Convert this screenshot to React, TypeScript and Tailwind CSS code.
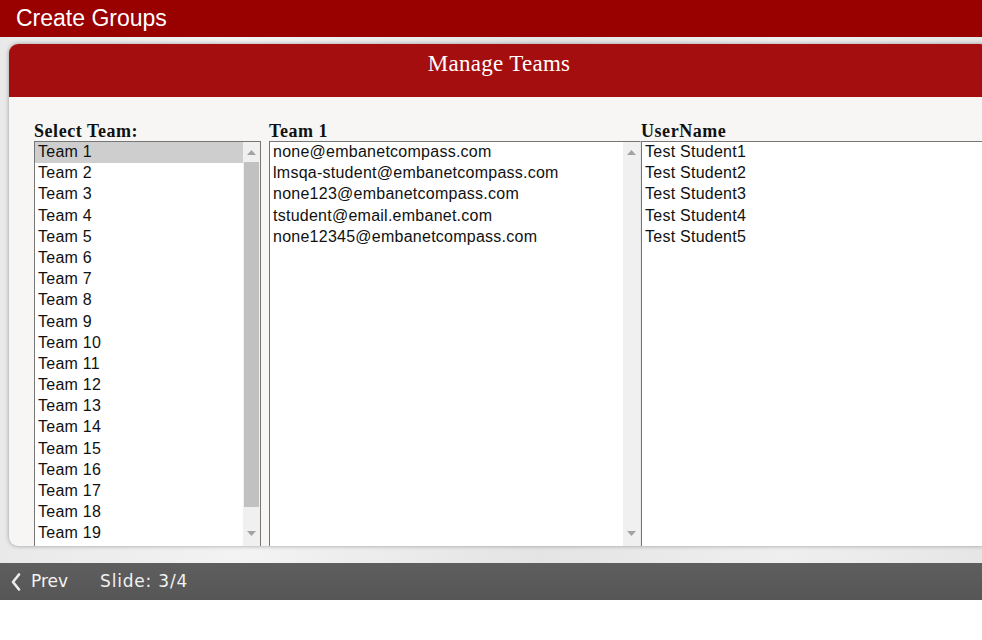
import React from "react";

const teams = Array.from({ length: 19 }, (_, i) => `Team ${i + 1}`);
const emails = [
  "none@embanetcompass.com",
  "lmsqa-student@embanetcompass.com",
  "none123@embanetcompass.com",
  "tstudent@email.embanet.com",
  "none12345@embanetcompass.com",
];
const users = ["Test Student1", "Test Student2", "Test Student3", "Test Student4", "Test Student5"];

function UpArrow() {
  return (
    <svg width="9" height="5" viewBox="0 0 9 5">
      <path d="M0 5 L4.5 0 L9 5Z" fill="#a3a3a3" />
    </svg>
  );
}
function DownArrow() {
  return (
    <svg width="9" height="5" viewBox="0 0 9 5">
      <path d="M0 0 L4.5 5 L9 0Z" fill="#a3a3a3" />
    </svg>
  );
}

function Scrollbar({ thumb }: { thumb: boolean }) {
  return (
    <div className="w-[17px] shrink-0 h-full bg-[#f0f0f0] flex flex-col items-center">
      <div className="h-[20px] w-full flex items-center justify-center">
        <UpArrow />
      </div>
      {thumb && <div className="w-[15px] h-[345px] bg-[#c1c1c1]" />}
      <div className="flex-1" />
      <div className="h-[25px] w-full flex items-center justify-center">
        <DownArrow />
      </div>
    </div>
  );
}

function ListBox({
  items,
  selected,
  scroll,
  thumb,
  className,
}: {
  items: string[];
  selected?: number;
  scroll: boolean;
  thumb?: boolean;
  className: string;
}) {
  return (
    <div className={`h-[406px] bg-white border border-[#767676] flex ${className}`}>
      <div className="flex-1 flex flex-col">
        {items.map((t, i) => (
          <div
            key={t}
            className={`h-[21.2px] leading-[20px] pl-[3px] text-[16px] tracking-[0.25px] text-[#111] whitespace-nowrap ${
              i === selected ? "bg-[#cecece]" : ""
            }`}
          >
            {t}
          </div>
        ))}
      </div>
      {scroll && <Scrollbar thumb={!!thumb} />}
    </div>
  );
}

function Label({ children }: { children: React.ReactNode }) {
  return (
    <div
      className="h-[20px] leading-[20px] text-[18px] font-bold tracking-[0.55px] text-[#111] whitespace-nowrap"
      style={{ fontFamily: '"Liberation Serif", "Times New Roman", serif' }}
    >
      {children}
    </div>
  );
}

export default function App() {
  return (
    <div
      className="w-[982px] h-[640px] bg-white flex flex-col overflow-hidden"
      style={{ fontFamily: '"Liberation Sans", Arial, sans-serif' }}
    >
      <div className="h-[37px] shrink-0 bg-[#990000] flex items-center pl-[16px]">
        <span className="text-[23px] text-white leading-none -mt-[1px]">Create Groups</span>
      </div>

      <div className="h-[526px] shrink-0 bg-[linear-gradient(90deg,#e9e9e9,#f3f3f3_25%,#e4e4e4_55%,#efefef_80%,#e6e6e6)] pt-[7px] pl-[9px]">
        <div className="w-[980px] h-[502px] rounded-[9px] overflow-hidden bg-[#f7f6f4] shadow-[0_0_4px_rgba(0,0,0,0.35)] flex flex-col">
          <div className="h-[53px] shrink-0 bg-[#a50e0e] flex justify-center pt-[6px]">
            <span
              className="text-[23px] leading-[28px] tracking-[0.3px] text-white"
              style={{ fontFamily: '"Liberation Serif", "Times New Roman", serif' }}
            >
              Manage Teams
            </span>
          </div>
          <div className="flex-1 pt-[24px] pl-[25px] flex">
            <div className="w-[227px] shrink-0 flex flex-col">
              <Label>Select Team:</Label>
              <ListBox items={teams} selected={0} scroll thumb className="w-[227px]" />
            </div>
            <div className="w-[372px] shrink-0 ml-[8px] flex flex-col">
              <Label>Team 1</Label>
              <ListBox items={emails} scroll className="w-[372px] border-r-[#e8e8e8]" />
            </div>
            <div className="flex-1 flex flex-col">
              <Label>UserName</Label>
              <ListBox items={users} scroll={false} className="w-[360px]" />
            </div>
          </div>
        </div>
      </div>

      <div
        className="h-[37px] shrink-0 bg-[linear-gradient(#5e5e5e,#565656)] flex items-center text-[#f2f2f2] text-[17px]"
        style={{ fontFamily: '"DejaVu Sans", Verdana, sans-serif' }}
      >
        <svg width="12" height="18" viewBox="0 0 12 18" className="ml-[10px]">
          <path d="M9 1.5 L3 9 L9 16.5" stroke="#eeeeee" strokeWidth="2.6" fill="none" strokeLinecap="round" strokeLinejoin="round" />
        </svg>
        <span className="ml-[9px]">Prev</span>
        <span className="ml-[32px] tracking-[0.8px]">Slide: 3/4</span>
      </div>
      <div className="flex-1 bg-white" />
    </div>
  );
}
